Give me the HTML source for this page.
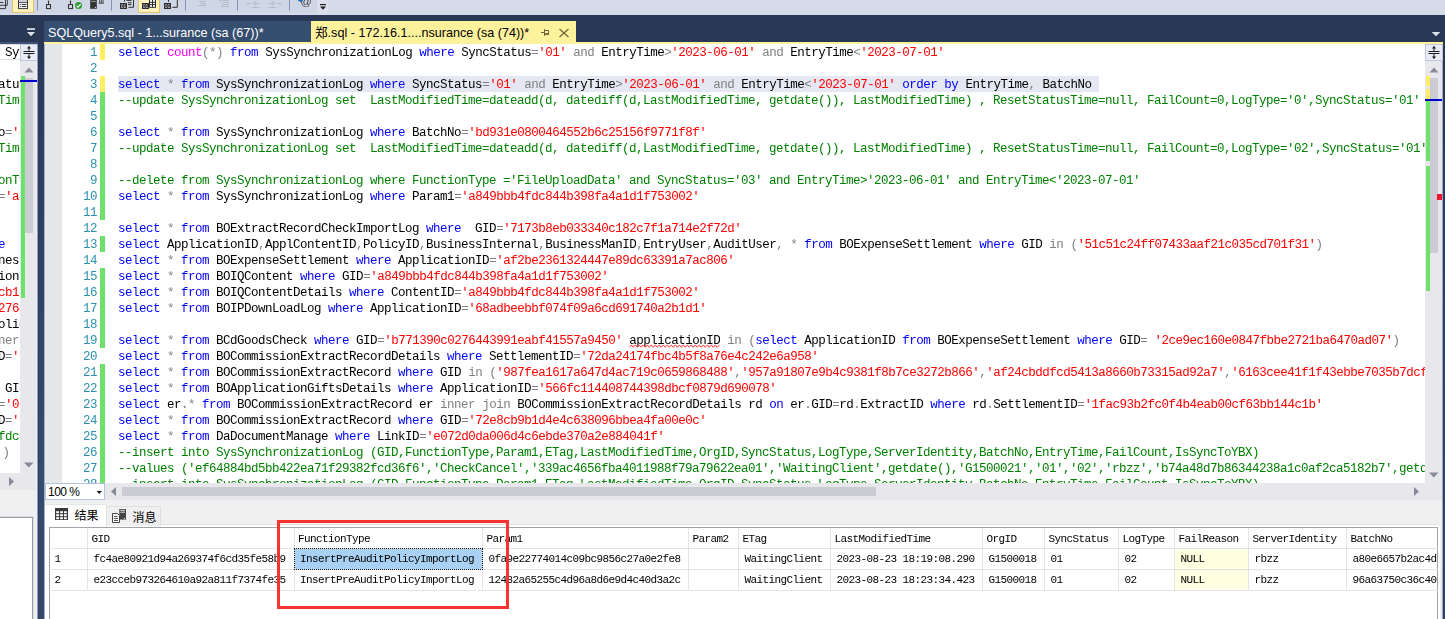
<!DOCTYPE html>
<html><head><meta charset="utf-8"><title>SSMS</title>
<style>
*{box-sizing:border-box;margin:0;padding:0}
html,body{width:1445px;height:619px;overflow:hidden;background:#293955}
body{position:relative;font-family:"Liberation Sans","Noto Sans CJK SC",sans-serif;font-size:12px;color:#000}
.abs{position:absolute}
#toolbar{left:0;top:0;width:1445px;height:15px;background:#cfd6e5}
#tab1{left:44px;top:21px;width:267px;height:21px;background:#364e6f;color:#fff;font-size:12.6px;line-height:23px;padding:0.800px 0 0 4px;white-space:nowrap;overflow:hidden}
#tab2{left:311px;top:21px;width:265px;height:23px;background:#fff29d;color:#000;font-size:12.6px;line-height:23px;padding:0.800px 0 0 4px;white-space:nowrap}
#tabline{left:44px;top:42px;width:1399px;height:2px;background:#fff29d}
#editor{left:44px;top:44px;width:1381px;height:439px;background:#fff;overflow:hidden;will-change:transform}
#margin{left:0;top:0;width:18px;height:439px;background:#e6e7e8}
.mono{font-family:"Liberation Mono",monospace}
.ln{position:absolute;left:0;height:16px;width:3000px;line-height:16px;white-space:pre;font-family:"Liberation Mono",monospace;font-size:12.5px;letter-spacing:-0.5012px}
.no{position:absolute;right:2947px;top:0.700px;color:#2b91af}
.tx{position:absolute;left:74px;top:0.700px}
.k{color:#00f}.s{color:#f00}.c{color:#008000}.g{color:#808080}.f{color:#f0f}
.hl{}
.sq{}
.bar{position:absolute;left:55.5px;width:5px}
.bar.y{background:#ffee62}.bar.gn{background:#6ce26c}
#left{will-change:transform;left:0;top:44px;width:20.300px;height:429px;background:#fff;overflow:hidden}
.lf{position:absolute;left:-2px;height:16px;line-height:16px;white-space:pre;font-family:"Liberation Mono",monospace;font-size:12.5px;letter-spacing:-0.5012px;padding-top:1px}
.sb{background:#e8e8ec}
.thumb{background:#cbccd3}
.split{background:#e9ecf7;border:1px solid #c3c8d8}
.gt{position:absolute;height:20px;line-height:20px;white-space:pre;font-family:"Liberation Mono",monospace;font-size:11px;letter-spacing:-0.6px}
</style></head><body>
<div id="toolbar" class="abs" style="background:#d6dbe9"></div>
<svg class="abs" style="left:0;top:0;will-change:transform" width="340" height="15" viewBox="0 0 340 15">
<rect x="0" y="0" width="340" height="15" fill="#d6dbe9"/>
<rect x="0" y="0" width="317" height="12.8" fill="#cfd6e5"/>
<rect x="317" y="0" width="11" height="13" fill="#dce0ec"/>
<!-- icon1 stacked pages -->
<path d="M-1 5.3H7.3V-1M-1 8.6H5.5V-1" fill="none" stroke="#3b3b3b" stroke-width="1"/>
<path d="M-1 2.5H3.5" stroke="#3b3b3b" stroke-width="1"/>
<!-- highlighted button 1 -->
<rect x="12.5" y="-1" width="21" height="13.4" fill="#fdf4bf" stroke="#e5c365" stroke-width="1"/>
<rect x="18.5" y="-1" width="9" height="9.6" fill="#eef0f6" stroke="#3b3b3b" stroke-width="1"/>
<rect x="19" y="0" width="8" height="2" fill="#cfcfe0"/>
<path d="M18.5 2.5H27.5" stroke="#3b3b3b" stroke-width="0.8"/>
<path d="M19.8 4.5H20.8M21.8 4.5H26.3M19.8 6.5H20.8M21.8 6.5H26.3" stroke="#3b3b3b" stroke-width="1"/>
<!-- separators -->
<g stroke="#8490ae" stroke-width="1"><path d="M37.5 0V10.7M111.5 0V10.7M185.5 0V10.7M237.5 0V10.7M289.5 0V10.7"/></g>
<!-- connect icons -->
<g fill="none" stroke="#2d2d2d" stroke-width="1">
<rect x="46.5" y="4.6" width="4" height="4"/><path d="M48.5 1.5V4.5"/>
<rect x="68.5" y="4.6" width="4" height="4"/><path d="M70.5 1.5V4.5"/>
</g>
<circle cx="48.5" cy="1.3" r="0.8" fill="#2d2d2d"/><circle cx="70.5" cy="1.3" r="0.8" fill="#2d2d2d"/>
<circle cx="78.5" cy="5.6" r="3.5" fill="#329a32"/>
<path d="M76.5 5.6L78 7.2L80.7 4.1" fill="none" stroke="#fff" stroke-width="1.1"/>
<!-- server icon -->
<rect x="90.2" y="-1" width="6.6" height="9.8" fill="#333"/>
<path d="M91.2 1.4H95.8" stroke="#bbb" stroke-width="0.8"/><circle cx="95.4" cy="7.3" r="0.6" fill="#fff"/>
<path d="M98.5 3.2H103.8M99.7 0V3.2M101.4 0V3.2M103.1 0V3.2" stroke="#333" stroke-width="0.8" fill="none"/>
<!-- results icons -->
<rect x="138.500" y="-1" width="21" height="13.400" fill="#fdf4bf" stroke="#e5c365" stroke-width="1"/>
<g fill="none" stroke="#2e2e2e" stroke-width="1">
<path d="M124.500 0V1.500M126.500 0.400H131.500M128 2.700H131.500M128 4.600H131.500M128.500 7.300H133.500V-1" />
<rect x="149.500" y="-1" width="6" height="8.300" fill="#fff"/><path d="M152.500 -1V7.300M149.500 2.300H155.500M149.500 4.600H155.500"/>
<path d="M168.500 0V1.800M172.300 7.300H177.300V-1"/>
</g>
<rect x="120" y="3" width="7" height="6" fill="#2e2e2e"/><rect x="142" y="3" width="7" height="6" fill="#2e2e2e"/><rect x="164" y="3" width="7" height="6" fill="#2e2e2e"/>
<g font-family="Liberation Sans,sans-serif" font-size="5" fill="#d8d8d8" opacity="0.990"><text x="120.800" y="7.900">01</text><text x="142.800" y="7.900">01</text><text x="164.800" y="7.900">01</text></g>
<!-- disabled icons -->
<g stroke="#b4bbcc" stroke-width="1" fill="none">
<path d="M199.500 1.5H206M200.5 3.5H206M198 5.500H206"/>
<path d="M222 0.5H229M223 2.5H229M222 4.5H229M221 6.5H229M219 0L221.500 2"/>
<path d="M246 3.5H251M253.500 3.5H260M256.500 1L253.500 3.500L256.500 6M252 7.5H260"/>
<path d="M277 3.5H282M268 3.5H274.500M271.500 1L274.500 3.500L271.500 6M268 7.5H276"/>
</g>
<!-- @ icon -->
<text x="300.5" y="5.2" font-family="Liberation Sans,sans-serif" font-size="11" fill="#3a3a3a">@</text>
<path d="M297.500 0L301 2.500L303 0Z" fill="#1f6fc0"/>
<!-- overflow -->
<rect x="320" y="4" width="6" height="1.200" fill="#1e1e1e"/><path d="M320 6.5H326L323 9.800Z" fill="#1e1e1e"/>
</svg>
<!-- left pane -->
<div class="abs" style="left:0;top:42px;width:38px;height:2px;background:#3d5277"></div>
<div class="abs sb" style="left:0;top:44px;width:38px;height:446px"></div>
<div id="left" class="abs">
<div class="abs" style="left:0;top:0;width:21px;height:16px;border-top:1px solid #e0e0e0;border-bottom:1px solid #e0e0e0"></div>
<div class="lf" style="top:0px"> Syn</div>
<div class="lf" style="top:32px">atus</div>
<div class="lf" style="top:48px"><span class="c">Time</span></div>
<div class="lf" style="top:80px">o<span class="g">=</span><span class="s">'d</span></div>
<div class="lf" style="top:96px"><span class="c">Time</span></div>
<div class="lf" style="top:128px"><span class="c">onTy</span></div>
<div class="lf" style="top:144px"><span class="g">=</span><span class="s">'a8</span></div>
<div class="lf" style="top:192px"><span class="k">e</span>  <span class="g">(</span></div>
<div class="lf" style="top:208px">ness</div>
<div class="lf" style="top:224px">ionI</div>
<div class="lf" style="top:240px"><span class="s">cb18</span></div>
<div class="lf" style="top:256px"><span class="s">2764</span></div>
<div class="lf" style="top:272px">olic</div>
<div class="lf" style="top:288px"><span class="g">ner</span></div>
<div class="lf" style="top:304px">D<span class="g">=</span><span class="s">''</span></div>
<div class="lf" style="top:336px"> GID</div>
<div class="lf" style="top:352px"><span class="g">=</span><span class="s">'05</span></div>
<div class="lf" style="top:368px">D<span class="g">=</span><span class="s">'r</span></div>
<div class="lf" style="top:384px"><span class="c">fdc8</span></div>
<div class="lf" style="top:400px"><span class="g" style="margin-left:4.500px">)</span></div>
</div>
<div class="abs" style="left:0;top:490px;width:38px;height:129px;background:#f0f0f0"></div>
<div class="abs" style="left:-2px;top:517px;width:35px;height:110px;background:#fff;border:1px solid #9a9da8;outline:1px solid #dcdde3"></div>
<!-- tabs -->
<div id="tabline" class="abs"></div>
<div id="tab1" class="abs">SQLQuery5.sql - 1...surance (sa (67))*</div>
<div id="tab2" class="abs">郑.sql - 172.16.1....nsurance (sa (74))*</div>
<!-- editor -->
<div id="editor" class="abs">
<div id="margin" class="abs"></div>
<div class="abs" style="left:74px;top:31.500px;width:980.800px;height:16.600px;background:#e5e8f2"></div>
<div class="bar y" style="top:0px;height:16px"></div>
<div class="bar y" style="top:32px;height:16px"></div>
<div class="bar gn" style="top:48px;height:128px"></div>
<div class="bar gn" style="top:192px;height:16px"></div>
<div class="bar gn" style="top:224px;height:80px"></div>
<div class="bar gn" style="top:320px;height:128px"></div>
<div class="ln" style="top:0px"><span class="no">1</span><span class="tx"><span class="k">select</span> <span class="f">count</span><span class="g">(</span><span class="g">*</span><span class="g">)</span> <span class="k">from</span> SysSynchronizationLog <span class="k">where</span> SyncStatus<span class="g">=</span><span class="s">'01'</span> <span class="g">and</span> EntryTime<span class="g">&gt;</span><span class="s">'2023-06-01'</span> <span class="g">and</span> EntryTime<span class="g">&lt;</span><span class="s">'2023-07-01'</span></span></div>
<div class="ln" style="top:16px"><span class="no">2</span><span class="tx"></span></div>
<div class="ln" style="top:32px"><span class="no">3</span><span class="tx"><span class="hl"><span class="k">select</span> <span class="g">*</span> <span class="k">from</span> SysSynchronizationLog <span class="k">where</span> SyncStatus<span class="g">=</span><span class="s">'01'</span> <span class="g">and</span> EntryTime<span class="g">&gt;</span><span class="s">'2023-06-01'</span> <span class="g">and</span> EntryTime<span class="g">&lt;</span><span class="s">'2023-07-01'</span> <span class="k">order</span> <span class="k">by</span> EntryTime<span class="g">,</span> BatchNo </span></span></div>
<div class="ln" style="top:48px"><span class="no">4</span><span class="tx"><span class="c">--update SysSynchronizationLog set  LastModifiedTime=dateadd(d, datediff(d,LastModifiedTime, getdate()), LastModifiedTime) , ResetStatusTime=null, FailCount=0,LogType='0',SyncStatus='01' ,</span></span></div>
<div class="ln" style="top:64px"><span class="no">5</span><span class="tx"></span></div>
<div class="ln" style="top:80px"><span class="no">6</span><span class="tx"><span class="k">select</span> <span class="g">*</span> <span class="k">from</span> SysSynchronizationLog <span class="k">where</span> BatchNo<span class="g">=</span><span class="s">'bd931e0800464552b6c25156f9771f8f'</span></span></div>
<div class="ln" style="top:96px"><span class="no">7</span><span class="tx"><span class="c">--update SysSynchronizationLog set  LastModifiedTime=dateadd(d, datediff(d,LastModifiedTime, getdate()), LastModifiedTime) , ResetStatusTime=null, FailCount=0,LogType='02',SyncStatus='01'</span></span></div>
<div class="ln" style="top:112px"><span class="no">8</span><span class="tx"></span></div>
<div class="ln" style="top:128px"><span class="no">9</span><span class="tx"><span class="c">--delete from SysSynchronizationLog where FunctionType ='FileUploadData' and SyncStatus='03' and EntryTime&gt;'2023-06-01' and EntryTime&lt;'2023-07-01'</span></span></div>
<div class="ln" style="top:144px"><span class="no">10</span><span class="tx"><span class="k">select</span> <span class="g">*</span> <span class="k">from</span> SysSynchronizationLog <span class="k">where</span> Param1<span class="g">=</span><span class="s">'a849bbb4fdc844b398fa4a1d1f753002'</span></span></div>
<div class="ln" style="top:160px"><span class="no">11</span><span class="tx"></span></div>
<div class="ln" style="top:176px"><span class="no">12</span><span class="tx"><span class="k">select</span> <span class="g">*</span> <span class="k">from</span> BOExtractRecordCheckImportLog <span class="k">where</span>  GID<span class="g">=</span><span class="s">'7173b8eb033340c182c7f1a714e2f72d'</span></span></div>
<div class="ln" style="top:192px"><span class="no">13</span><span class="tx"><span class="k">select</span> ApplicationID<span class="g">,</span>ApplContentID<span class="g">,</span>PolicyID<span class="g">,</span>BusinessInternal<span class="g">,</span>BusinessManID<span class="g">,</span>EntryUser<span class="g">,</span>AuditUser<span class="g">,</span> <span class="g">*</span> <span class="k">from</span> BOExpenseSettlement <span class="k">where</span> GID <span class="g">in</span> <span class="g">(</span><span class="s">'51c51c24ff07433aaf21c035cd701f31'</span><span class="g">)</span></span></div>
<div class="ln" style="top:208px"><span class="no">14</span><span class="tx"><span class="k">select</span> <span class="g">*</span> <span class="k">from</span> BOExpenseSettlement <span class="k">where</span> ApplicationID<span class="g">=</span><span class="s">'af2be2361324447e89dc63391a7ac806'</span></span></div>
<div class="ln" style="top:224px"><span class="no">15</span><span class="tx"><span class="k">select</span> <span class="g">*</span> <span class="k">from</span> BOIQContent <span class="k">where</span> GID<span class="g">=</span><span class="s">'a849bbb4fdc844b398fa4a1d1f753002'</span></span></div>
<div class="ln" style="top:240px"><span class="no">16</span><span class="tx"><span class="k">select</span> <span class="g">*</span> <span class="k">from</span> BOIQContentDetails <span class="k">where</span> ContentID<span class="g">=</span><span class="s">'a849bbb4fdc844b398fa4a1d1f753002'</span></span></div>
<div class="ln" style="top:256px"><span class="no">17</span><span class="tx"><span class="k">select</span> <span class="g">*</span> <span class="k">from</span> BOIPDownLoadLog <span class="k">where</span> ApplicationID<span class="g">=</span><span class="s">'68adbeebbf074f09a6cd691740a2b1d1'</span></span></div>
<div class="ln" style="top:272px"><span class="no">18</span><span class="tx"></span></div>
<div class="ln" style="top:288px"><span class="no">19</span><span class="tx"><span class="k">select</span> <span class="g">*</span> <span class="k">from</span> BCdGoodsCheck <span class="k">where</span> GID<span class="g">=</span><span class="s">'b771390c0276443991eabf41557a9450'</span> <span class="sq">applicationID</span> <span class="g">in</span> <span class="g">(</span><span class="k">select</span> ApplicationID <span class="k">from</span> BOExpenseSettlement <span class="k">where</span> GID<span class="g">=</span> <span class="s">'2ce9ec160e0847fbbe2721ba6470ad07'</span><span class="g">)</span></span></div>
<div class="ln" style="top:304px"><span class="no">20</span><span class="tx"><span class="k">select</span> <span class="g">*</span> <span class="k">from</span> BOCommissionExtractRecordDetails <span class="k">where</span> SettlementID<span class="g">=</span><span class="s">'72da24174fbc4b5f8a76e4c242e6a958'</span></span></div>
<div class="ln" style="top:320px"><span class="no">21</span><span class="tx"><span class="k">select</span> <span class="g">*</span> <span class="k">from</span> BOCommissionExtractRecord <span class="k">where</span> GID <span class="g">in</span> <span class="g">(</span><span class="s">'987fea1617a647d4ac719c0659868488'</span><span class="g">,</span><span class="s">'957a91807e9b4c9381f8b7ce3272b866'</span><span class="g">,</span><span class="s">'af24cbddfcd5413a8660b73315ad92a7'</span><span class="g">,</span><span class="s">'6163cee41f1f43ebbe7035b7dcf1a2b3c'</span><span class="g">,</span></span></div>
<div class="ln" style="top:336px"><span class="no">22</span><span class="tx"><span class="k">select</span> <span class="g">*</span> <span class="k">from</span> BOApplicationGiftsDetails <span class="k">where</span> ApplicationID<span class="g">=</span><span class="s">'566fc114408744398dbcf0879d690078'</span></span></div>
<div class="ln" style="top:352px"><span class="no">23</span><span class="tx"><span class="k">select</span> er<span class="g">.</span><span class="g">*</span> <span class="k">from</span> BOCommissionExtractRecord er <span class="g">inner</span> <span class="g">join</span> BOCommissionExtractRecordDetails rd <span class="k">on</span> er<span class="g">.</span>GID<span class="g">=</span>rd<span class="g">.</span>ExtractID <span class="k">where</span> rd<span class="g">.</span>SettlementID<span class="g">=</span><span class="s">'1fac93b2fc0f4b4eab00cf63bb144c1b'</span></span></div>
<div class="ln" style="top:368px"><span class="no">24</span><span class="tx"><span class="k">select</span> <span class="g">*</span> <span class="k">from</span> BOCommissionExtractRecord <span class="k">where</span> GID<span class="g">=</span><span class="s">'72e8cb9b1d4e4c638096bbea4fa00e0c'</span></span></div>
<div class="ln" style="top:384px"><span class="no">25</span><span class="tx"><span class="k">select</span> <span class="g">*</span> <span class="k">from</span> DaDocumentManage <span class="k">where</span> LinkID<span class="g">=</span><span class="s">'e072d0da006d4c6ebde370a2e884041f'</span></span></div>
<div class="ln" style="top:400px"><span class="no">26</span><span class="tx"><span class="c">--insert into SysSynchronizationLog (GID,FunctionType,Param1,ETag,LastModifiedTime,OrgID,SyncStatus,LogType,ServerIdentity,BatchNo,EntryTime,FailCount,IsSyncToYBX)</span></span></div>
<div class="ln" style="top:416px"><span class="no">27</span><span class="tx"><span class="c">--values ('ef64884bd5bb422ea71f29382fcd36f6','CheckCancel','339ac4656fba4011988f79a79622ea01','WaitingClient',getdate(),'G1500021','01','02','rbzz','b74a48d7b86344238a1c0af2ca5182b7',getdate(),0,'0')</span></span></div>
<div class="ln" style="top:432px"><span class="no">28</span><span class="tx"><span class="c">--insert into SysSynchronizationLog (GID,FunctionType,Param1,ETag,LastModifiedTime,OrgID,SyncStatus,LogType,ServerIdentity,BatchNo,EntryTime,FailCount,IsSyncToYBX)</span></span></div>
<svg class="abs" style="left:0;top:0" width="700" height="320" viewBox="0 0 700 320"><path d="M585.3 303.3L587.3 300.9L589.3 303.3L591.3 300.9L593.3 303.3L595.3 300.9L597.3 303.3L599.3 300.9L601.3 303.3L603.3 300.9L605.3 303.3L607.3 300.9L609.3 303.3L611.3 300.9L613.3 303.3L615.3 300.9L617.3 303.3L619.3 300.9L621.3 303.3L623.3 300.9L625.3 303.3L627.3 300.9L629.3 303.3L631.3 300.9L633.3 303.3L635.3 300.9L637.3 303.3L639.3 300.9L641.3 303.3L643.3 300.9L645.3 303.3L647.3 300.9L649.3 303.3L651.3 300.9L653.3 303.3L655.3 300.9L657.3 303.3L659.3 300.9L661.3 303.3L663.3 300.9L665.3 303.3L667.3 300.9L669.3 303.3L671.3 300.9L673.3 303.3L675.3 300.9" fill="none" stroke="#ff3838" stroke-width="1"/></svg>
</div>
<!-- editor v scrollbar -->
<div class="abs sb" style="left:1425px;top:44px;width:17px;height:456px"></div>
<div class="abs" style="left:1442px;top:44px;width:1px;height:575px;background:#9aa7c9"></div><div class="abs" style="left:1442.500px;top:44px;width:3px;height:575px;background:linear-gradient(180deg,#293955 0px,#293955 20px,#2a3b5d 162px,#2f4366 436px,#2e4163 575px)"></div>

<!-- h scrollbar -->
<div class="abs sb" style="left:44px;top:483px;width:1398px;height:17px"></div>
<div class="abs" style="left:45px;top:483px;width:60px;height:17px;background:#fff;border:1px solid #b8c2e0;font-size:12px;letter-spacing:-0.5px;line-height:16px;padding-left:2px">100 %</div>
<div class="abs thumb" style="left:122px;top:487px;width:754px;height:8.700px"></div>

<!-- tab icons -->
<svg class="abs" style="left:20px;top:24px" width="20" height="16" viewBox="0 0 20 16"><rect x="7" y="4.200" width="8" height="1.700" fill="#dfe2ea"/><path d="M7 8H15L11 12.200Z" fill="#dfe2ea"/></svg>
<svg class="abs" style="left:536px;top:24px" width="40" height="16" viewBox="0 0 40 16">
<path d="M5 8.500H8.500M8.500 5V12M9 6.500H12.500V10.500" fill="none" stroke="#75643f" stroke-width="1"/><path d="M9 10H13" stroke="#75643f" stroke-width="1.800"/>
<path d="M23.500 5L32.500 13M32.500 5L23.500 13" stroke="#75643f" stroke-width="1.300" fill="none"/>
</svg>
<svg class="abs" style="left:1428px;top:29px" width="14" height="10" viewBox="0 0 14 10"><path d="M3.700 3H12.300L8 7.300Z" fill="#dfe2ea"/></svg>

<!-- left pane scrollbar -->
<div class="abs split" style="left:20px;top:44px;width:17.500px;height:16.500px"></div>
<svg class="abs" style="left:19.500px;top:44px" width="18" height="17" viewBox="0 0 18 17"><g stroke="#1e1e1e" stroke-width="1" fill="none"><path d="M3.500 7.500H14.500M3.500 9.500H14.500M9 2.500V7M9 10V14.500"/></g><path d="M7 4.500L9 2L11 4.500ZM7 12.500L9 15L11 12.500Z" fill="#1e1e1e"/></svg>
<svg class="abs" style="left:20px;top:62px" width="18" height="14" viewBox="0 0 18 14"><path d="M4.500 10.500L9 5.500L13.500 10.500Z" fill="#868999"/></svg>
<div class="abs thumb" style="left:25px;top:78px;width:8px;height:155px"></div>
<div class="abs" style="left:21px;top:76px;width:4px;height:222px;background:#6ce26c"></div>
<div class="abs" style="left:20px;top:80px;width:17px;height:2px;background:#0000cd;z-index:3"></div>
<svg class="abs" style="left:20px;top:458px" width="18" height="14" viewBox="0 0 18 14"><path d="M4 4.500H13.500L8.750 9.500Z" fill="#868999"/></svg>
<svg class="abs" style="left:4px;top:474px" width="14" height="14" viewBox="0 0 14 14"><path d="M5 3L10 7.500L5 12Z" fill="#868999"/></svg>
<div class="abs" style="left:36px;top:61px;width:1px;height:558px;background:#f0f0f3"></div><div class="abs" style="left:37px;top:44px;width:1px;height:575px;background:#8d9cc4"></div>
<div class="abs" style="left:38px;top:44px;width:6px;height:575px;background:linear-gradient(180deg,#293955 0px,#293955 20px,#2a3b5d 162px,#2f4366 436px,#2e4163 575px)"></div><div class="abs" style="left:39px;top:44px;width:4.500px;height:575px;background:linear-gradient(180deg,#293955 0px,#2a3b58 20px,#2f4162 162px,#364a6c 436px,#354869 575px)"></div><div class="abs" style="left:44px;top:44px;width:1px;height:575px;background:#a3afd0"></div>

<!-- editor scrollbar -->
<div class="abs split" style="left:1425px;top:44px;width:17.5px;height:16.5px"></div>
<svg class="abs" style="left:1425px;top:44px" width="18" height="17" viewBox="0 0 18 17"><g stroke="#1e1e1e" stroke-width="1" fill="none"><path d="M3.500 7.500H14.500M3.500 9.500H14.500M9 2.500V7M9 10V14.500"/></g><path d="M7 4.500L9 2L11 4.500ZM7 12.500L9 15L11 12.500Z" fill="#1e1e1e"/></svg>
<svg class="abs" style="left:1425px;top:62px" width="18" height="14" viewBox="0 0 18 14"><path d="M4.500 10.500L9 5.500L13.500 10.500Z" fill="#868999"/></svg>
<div class="abs thumb" style="left:1430px;top:78px;width:8px;height:175px"></div>
<div class="abs" style="left:1426px;top:76px;width:4px;height:10px;background:#ffee62"></div>
<div class="abs" style="left:1426px;top:89px;width:4px;height:11px;background:#ffee62"></div>
<div class="abs" style="left:1426px;top:100px;width:4px;height:61px;background:#6ce26c"></div>
<div class="abs" style="left:1426px;top:166px;width:4px;height:125px;background:#6ce26c"></div>
<div class="abs" style="left:1425px;top:99px;width:17px;height:2px;background:#0000cd"></div>
<div class="abs" style="left:1437px;top:194px;width:5px;height:5.500px;background:#f0142d"></div>
<svg class="abs" style="left:1425px;top:468px" width="18" height="14" viewBox="0 0 18 14"><path d="M4 4.500H13.500L8.750 9.500Z" fill="#868999"/></svg>
<svg class="abs" style="left:1409px;top:484px" width="14" height="14" viewBox="0 0 14 14"><path d="M5 3L10 7.500L5 12Z" fill="#868999"/></svg>
<svg class="abs" style="left:106px;top:484px" width="14" height="14" viewBox="0 0 14 14"><path d="M10 3L5 7.500L10 12Z" fill="#868999"/></svg>
<svg class="abs" style="left:93px;top:487px" width="12" height="10" viewBox="0 0 12 10"><path d="M3.500 4H9L6.250 7Z" fill="#1e1e1e"/></svg>
<!-- results -->
<div class="abs" style="left:45px;top:500px;width:1397px;height:119px;background:#f0f0f0"></div><div class="abs" style="left:45px;top:524px;width:1395px;height:100px;background:#fff;border-top:1px solid #e2e2e4"></div>
<div class="abs" style="left:45px;top:504px;width:61.500px;height:23px;background:#fff;border-top:1px solid #e6e6e6;border-right:1px solid #e6e6e6"></div>
<div class="abs" style="left:106px;top:506px;width:55px;height:19.500px;border:1px solid #dfdfe1;border-bottom:none;background:#f0f0f0"></div>
<svg class="abs" style="left:55px;top:508px" width="14" height="13" viewBox="0 0 14 13"><rect x="0" y="0" width="13" height="12" fill="#3a3a3a"/><rect x="1.2" y="3.2" width="2.800" height="2" fill="#fff"/><rect x="1.2" y="6.2" width="2.800" height="2" fill="#fff"/><rect x="1.2" y="9.2" width="2.800" height="2" fill="#fff"/><rect x="5.1" y="3.2" width="2.800" height="2" fill="#fff"/><rect x="5.1" y="6.2" width="2.800" height="2" fill="#fff"/><rect x="5.1" y="9.2" width="2.800" height="2" fill="#fff"/><rect x="9.0" y="3.2" width="2.800" height="2" fill="#fff"/><rect x="9.0" y="6.2" width="2.800" height="2" fill="#fff"/><rect x="9.0" y="9.2" width="2.800" height="2" fill="#fff"/></svg>
<div class="abs" style="left:74.500px;top:505px;font-size:12px;line-height:22px">结果</div>
<svg class="abs" style="left:111px;top:507px" width="17" height="17" viewBox="0 0 17 17"><rect x="8.300" y="2" width="6.700" height="10.600" fill="#444"/><path d="M9.300 3.300H14M9.300 5.200H14" stroke="#f4f4f4" stroke-width="0.900"/><circle cx="13.500" cy="11.300" r="0.600" fill="#fff"/><path d="M1.500 6.500H6.500L8.500 8.500V15.500H1.500Z" fill="#f6f6f6" stroke="#444" stroke-width="1"/><path d="M3 9.500H6.500M3 11.500H7M3 13.500H7" stroke="#444" stroke-width="0.900"/></svg>
<div class="abs" style="left:132.500px;top:507px;font-size:12px;line-height:22px">消息</div>

<div class="abs" style="left:49px;top:527px;width:1389px;height:100px;border:1px solid #a2a4ad;background:#fff"></div>
<div id="grid" class="abs" style="left:0;top:0;width:1438px;height:619px;overflow:hidden;will-change:transform">
<div class="abs" style="left:1175px;top:549px;width:73px;height:21px;background:#ffffe1"></div>
<div class="abs" style="left:1175px;top:570px;width:73px;height:21px;background:#ffffe1"></div>
<div class="abs" style="left:294px;top:548px;width:189px;height:22px;background:#a8d1f3;border:1px dotted #111"></div>
<div class="abs" style="left:51px;top:548px;width:1387px;height:1px;background:#e4e4e6"></div>
<div class="abs" style="left:51px;top:569px;width:1387px;height:1px;background:#e4e4e6"></div>
<div class="abs" style="left:51px;top:590px;width:1387px;height:1px;background:#e4e4e6"></div>
<div class="abs" style="left:87px;top:528px;width:1px;height:63px;background:#e4e4e6"></div>
<div class="abs" style="left:294px;top:528px;width:1px;height:63px;background:#e4e4e6"></div>
<div class="abs" style="left:482px;top:528px;width:1px;height:63px;background:#e4e4e6"></div>
<div class="abs" style="left:688px;top:528px;width:1px;height:63px;background:#e4e4e6"></div>
<div class="abs" style="left:738px;top:528px;width:1px;height:63px;background:#e4e4e6"></div>
<div class="abs" style="left:830px;top:528px;width:1px;height:63px;background:#e4e4e6"></div>
<div class="abs" style="left:982px;top:528px;width:1px;height:63px;background:#e4e4e6"></div>
<div class="abs" style="left:1044px;top:528px;width:1px;height:63px;background:#e4e4e6"></div>
<div class="abs" style="left:1118px;top:528px;width:1px;height:63px;background:#e4e4e6"></div>
<div class="abs" style="left:1174px;top:528px;width:1px;height:63px;background:#e4e4e6"></div>
<div class="abs" style="left:1248px;top:528px;width:1px;height:63px;background:#e4e4e6"></div>
<div class="abs" style="left:1346px;top:528px;width:1px;height:63px;background:#e4e4e6"></div>
<div class="abs" style="left:294px;top:548px;width:189px;height:22px;border:1px dotted #111"></div>
<div class="gt" style="left:91.5px;top:528.7px">GID</div>
<div class="gt" style="left:298.0px;top:528.7px">FunctionType</div>
<div class="gt" style="left:486.5px;top:528.7px">Param1</div>
<div class="gt" style="left:692.5px;top:528.7px">Param2</div>
<div class="gt" style="left:742.5px;top:528.7px">ETag</div>
<div class="gt" style="left:834.5px;top:528.7px">LastModifiedTime</div>
<div class="gt" style="left:986.5px;top:528.7px">OrgID</div>
<div class="gt" style="left:1048.5px;top:528.7px">SyncStatus</div>
<div class="gt" style="left:1122.5px;top:528.7px">LogType</div>
<div class="gt" style="left:1178.5px;top:528.7px">FailReason</div>
<div class="gt" style="left:1252.5px;top:528.7px">ServerIdentity</div>
<div class="gt" style="left:1350.5px;top:528.7px">BatchNo</div>
<div class="gt" style="left:54.5px;top:548.6px">1</div>
<div class="gt" style="left:93.5px;top:548.6px">fc4ae80921d94a269374f6cd35fe58b9</div>
<div class="gt" style="left:300.0px;top:548.6px">InsertPreAuditPolicyImportLog</div>
<div class="gt" style="left:488.5px;top:548.6px">0fa9e22774014c09bc9856c27a0e2fe8</div>
<div class="gt" style="left:744.5px;top:548.6px">WaitingClient</div>
<div class="gt" style="left:836.5px;top:548.6px">2023-08-23 18:19:08.290</div>
<div class="gt" style="left:988.5px;top:548.6px">G1500018</div>
<div class="gt" style="left:1050.5px;top:548.6px">01</div>
<div class="gt" style="left:1124.5px;top:548.6px">02</div>
<div class="gt" style="left:1180.5px;top:548.6px">NULL</div>
<div class="gt" style="left:1254.5px;top:548.6px">rbzz</div>
<div class="gt" style="left:1352.5px;top:548.6px">a80e6657b2ac4d</div>
<div class="gt" style="left:54.5px;top:569.6px">2</div>
<div class="gt" style="left:93.5px;top:569.6px">e23cceb973264610a92a811f7374fe35</div>
<div class="gt" style="left:300.0px;top:569.6px">InsertPreAuditPolicyImportLog</div>
<div class="gt" style="left:488.5px;top:569.6px">12482a65255c4d96a8d6e9d4c40d3a2c</div>
<div class="gt" style="left:744.5px;top:569.6px">WaitingClient</div>
<div class="gt" style="left:836.5px;top:569.6px">2023-08-23 18:23:34.423</div>
<div class="gt" style="left:988.5px;top:569.6px">G1500018</div>
<div class="gt" style="left:1050.5px;top:569.6px">01</div>
<div class="gt" style="left:1124.5px;top:569.6px">02</div>
<div class="gt" style="left:1180.5px;top:569.6px">NULL</div>
<div class="gt" style="left:1254.5px;top:569.6px">rbzz</div>
<div class="gt" style="left:1352.5px;top:569.6px">96a63750c36c40</div>
</div>
<div class="abs" style="left:277px;top:520px;width:232px;height:89px;border:3px solid #f93232"></div>
</body></html>
